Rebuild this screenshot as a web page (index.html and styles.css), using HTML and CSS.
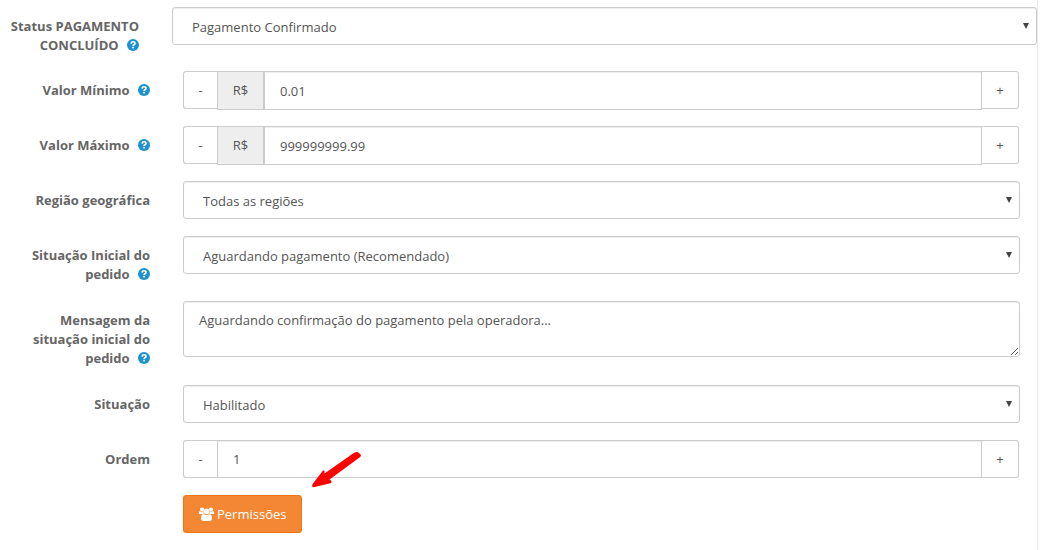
FILE: index.html
```
<!DOCTYPE html>
<html lang="pt-BR">
<head>
    <meta charset="UTF-8">
    <meta name="viewport" content="width=device-width, initial-scale=1.0">
    <title>Configurações de pagamento</title>
    <link rel="stylesheet" href="styles.css">
</head>
<body>
    <svg class="sprite" aria-hidden="true">
        <symbol id="icon-help" viewBox="0 0 12 12">
            <circle cx="6" cy="6" r="6" fill="#1e91cf"/>
            <path d="M4 4.6C4.2 3.3 5 2.8 6 2.8c1.200 0 2 .7 2 1.600 0 1.300-1.900 1.400-1.900 2.500" fill="none" stroke="#fff" stroke-width="1.600"/>
            <rect x="5.200" y="7.800" width="1.700" height="1.600" fill="#fff"/>
        </symbol>
    </svg>

    <form class="panel">
        <div class="form-row form-row-wide">
            <label for="status">Status PAGAMENTO CONCLUÍDO <svg class="help"><use href="#icon-help"/></svg></label>
            <div class="select">
                <select id="status" class="form-control">
                    <option>Pagamento Confirmado</option>
                </select>
            </div>
        </div>

        <div class="form-row form-row-money">
            <label for="minimo">Valor Mínimo <svg class="help"><use href="#icon-help"/></svg></label>
            <div class="spinner">
                <button type="button" class="btn-step">-</button>
                <span class="addon">R$</span>
                <input type="text" id="minimo" class="form-control" value="0.01">
                <button type="button" class="btn-step btn-plus">+</button>
            </div>
        </div>

        <div class="form-row form-row-money">
            <label for="maximo">Valor Máximo <svg class="help"><use href="#icon-help"/></svg></label>
            <div class="spinner">
                <button type="button" class="btn-step">-</button>
                <span class="addon">R$</span>
                <input type="text" id="maximo" class="form-control" value="999999999.99">
                <button type="button" class="btn-step btn-plus">+</button>
            </div>
        </div>

        <div class="form-row">
            <label for="regiao">Região geográfica</label>
            <div class="select">
                <select id="regiao" class="form-control">
                    <option>Todas as regiões</option>
                </select>
            </div>
        </div>

        <div class="form-row">
            <label for="inicial">Situação Inicial do pedido <svg class="help"><use href="#icon-help"/></svg></label>
            <div class="select">
                <select id="inicial" class="form-control">
                    <option>Aguardando pagamento (Recomendado)</option>
                </select>
            </div>
        </div>

        <div class="form-row">
            <label for="mensagem">Mensagem da situação inicial do pedido <svg class="help"><use href="#icon-help"/></svg></label>
            <textarea id="mensagem" class="form-control">Aguardando confirmação do pagamento pela operadora...</textarea>
        </div>

        <div class="form-row">
            <label for="situacao">Situação</label>
            <div class="select">
                <select id="situacao" class="form-control">
                    <option>Habilitado</option>
                </select>
            </div>
        </div>

        <div class="form-row">
            <label for="ordem">Ordem</label>
            <div class="spinner">
                <button type="button" class="btn-step">-</button>
                <input type="text" id="ordem" class="form-control" value="1">
                <button type="button" class="btn-step btn-plus">+</button>
            </div>
        </div>

        <div class="form-row form-actions">
            <div class="action">
                <button type="button" class="btn-permissions">
                    <svg class="users" viewBox="0 0 15 14" fill="#fff" aria-hidden="true">
                        <circle cx="3" cy="2.500" r="2"/>
                        <circle cx="12" cy="2.500" r="2"/>
                        <path d="M0 7V5.500C0 4.500.5 4 1.200 4.200 2.500 4.900 3.500 4.700 4.300 4.500 4.200 5.500 4.600 6.300 5 7Z"/>
                        <path d="M15 7V5.500C15 4.500 14.500 4 13.800 4.200 12.500 4.900 11.500 4.700 10.700 4.500 10.800 5.500 10.400 6.300 10 7Z"/>
                        <circle cx="7.500" cy="4.300" r="2.900"/>
                        <path d="M4.500 7C2.700 7 2 9 2 11.500 2 13 3 14 4.300 14h6.400C12 14 13 13 13 11.500 13 9 12.300 7 10.500 7 8.500 8.400 6.500 8.400 4.500 7Z"/>
                    </svg>
                    Permissões
                </button>
                <svg class="pointer" viewBox="0 0 50 38" aria-hidden="true">
                    <path d="M1 32.500 11 19.500Q12 19 12.500 20V22.500L42.500 1.500Q45 .5 46.500 1.500L49 4Q49 5.500 47.500 6.500L17.500 28.500 19.500 30Q20 31.500 18.500 32.200L2.500 36Q0 36.500 0 35Z" fill="#fe0000"/>
                </svg>
            </div>
        </div>
    </form>
</body>
</html>
```

FILE: styles.css
```
* {
    box-sizing: border-box;
}
body {
    margin: 0;
    background: #fff;
    color: #555;
    font-family: "Open Sans", sans-serif;
    font-size: 13px;
    line-height: 19px;
}
.sprite {
    display: none;
}
.panel {
    min-height: 100vh;
    margin-right: 14px;
    padding-top: 7px;
    border-right: 1px solid #e8e8e8;
}
.form-row {
    display: grid;
    grid-template-columns: 150px 1fr;
    column-gap: 33px;
    align-items: start;
    margin-bottom: 17px;
    padding-right: 17px;
}
.form-row-wide {
    grid-template-columns: 139px 1fr;
    margin-bottom: 16px;
    padding-right: 0;
}
.form-row-money {
    margin-bottom: 16px;
}
label {
    padding: 10px 0 0 8px;
    color: #666;
    font-weight: 700;
    text-align: right;
}
.form-row:not(.form-row-wide) label {
    padding-left: 20px;
}
.help {
    width: 12px;
    height: 12px;
    margin-left: 5px;
    vertical-align: -1px;
}
.form-control {
    display: block;
    width: 100%;
    height: 38px;
    margin: 0;
    padding: 8px 15px;
    border: 1px solid #ccc;
    border-radius: 3px;
    background: #fff;
    box-shadow: inset 0 1px 1px rgba(0, 0, 0, 0.075);
    color: #555;
    font: inherit;
}
.select {
    position: relative;
}
.select select {
    appearance: none;
    padding: 10px 19px 8px;
}
.select::after {
    content: "";
    position: absolute;
    top: 16px;
    right: 8px;
    border: 3px solid transparent;
    border-top: 6px solid #444;
    border-bottom: 0;
    pointer-events: none;
}
textarea.form-control {
    height: 56px;
    padding-top: 9px;
    resize: vertical;
}
.spinner {
    display: flex;
    align-items: flex-start;
    margin-right: 1px;
}
.spinner .form-control {
    flex: 1;
    width: auto;
    min-width: 0;
    border-radius: 0;
}
.form-row-money .form-control,
.addon {
    height: 39px;
}
.addon {
    width: 47px;
    padding: 9px 0;
    border: 1px solid #ccc;
    background: #eee;
    text-align: center;
}
.btn-step {
    width: 34px;
    height: 38px;
    padding: 0;
    border: 1px solid #ccc;
    border-right: 0;
    border-radius: 3px 0 0 3px;
    background: #fff;
    color: #555;
    font: inherit;
    cursor: pointer;
}
.btn-plus {
    width: 37px;
    border-right: 1px solid #ccc;
    border-left: 0;
    border-radius: 0 3px 3px 0;
}
.form-actions {
    margin-bottom: 0;
}
.action {
    position: relative;
    grid-column: 2;
    justify-self: start;
}
.btn-permissions {
    display: flex;
    align-items: center;
    gap: 3px;
    height: 38px;
    padding: 0 15px;
    border: 1px solid #ef7415;
    border-radius: 3px;
    background: #f38733;
    color: #fff;
    font: inherit;
    cursor: pointer;
}
.users {
    width: 15px;
    height: 14px;
}
/* red arrow pointing at the button */
.pointer {
    position: absolute;
    right: -60px;
    bottom: 44px;
    width: 50px;
    height: 38px;
}
```
